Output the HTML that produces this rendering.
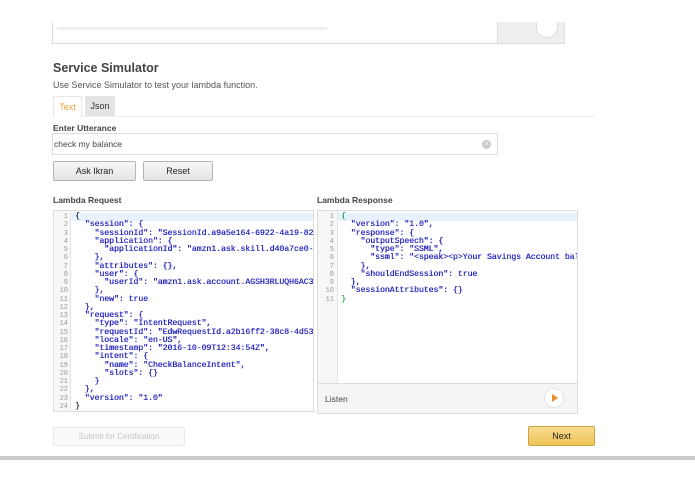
<!DOCTYPE html>
<html><head><meta charset="utf-8"><style>
*{box-sizing:border-box;margin:0;padding:0}
body{width:695px;height:494px;background:#fff;position:relative;overflow:hidden;font-family:"Liberation Sans",Arial,sans-serif;color:#333}
.a{position:absolute}
.code{font-family:"Liberation Mono",monospace;font-size:8.2px;line-height:8.25px;white-space:pre;color:#2828c0;letter-spacing:-0.05px;text-shadow:0.3px 0 0 #2828c0}
.ln{font-family:"Liberation Mono",monospace;font-size:7px;line-height:8.25px;white-space:pre;color:#999;text-align:right}
.btn{border:1px solid #b5b5b5;border-radius:2px;background:linear-gradient(#f7f7f7,#e4e4e4);font-size:9px;text-align:center;color:#222}
</style></head><body>
<div class="a" style="left:52px;top:22px;width:513px;height:22px;border:1px solid #ddd;border-top:none"></div>
<div class="a" style="left:57px;top:27px;width:270px;height:3px;background:#f0f0f0"></div>
<div class="a" style="left:497px;top:22px;width:67px;height:21px;background:#efefef;border-left:1px solid #ddd"></div>
<div class="a" style="left:536px;top:22px;width:22px;height:16px;border-radius:0 0 11px 11px;background:#fff;border:1px solid #ddd;border-top:none"></div>

<div class="a" style="left:53px;top:61px;font-size:12.5px;font-weight:bold;color:#444">Service Simulator</div>
<div class="a" style="left:53px;top:80px;font-size:9px;color:#555">Use Service Simulator to test your lambda function.</div>
<div class="a" style="left:53px;top:96px;width:29px;height:21px;border:1px solid #e6e6e6;border-bottom:none;background:#fff;font-size:9px;color:#e8a23a;text-align:center;line-height:21px">Text</div>
<div class="a" style="left:85px;top:96px;width:30px;height:20px;background:#e4e4e4;font-size:9px;color:#333;text-align:center;line-height:20px">Json</div>
<div class="a" style="left:82px;top:116px;width:513px;height:1px;background:#eee"></div>
<div class="a" style="left:53px;top:123px;font-size:8.5px;font-weight:bold;color:#444">Enter Utterance</div>
<div class="a" style="left:52px;top:133px;width:446px;height:22px;border:1px solid #ddd;font-size:8.5px;color:#444;line-height:20px;padding-left:1px">check my balance</div>
<div class="a" style="left:482px;top:140px;width:9px;height:9px;border-radius:50%;background:#ccc;color:#fff;font-size:7px;line-height:9px;text-align:center">×</div>
<div class="a btn" style="left:53px;top:161px;width:83px;height:20px;line-height:18px">Ask Ikran</div>
<div class="a btn" style="left:143px;top:161px;width:70px;height:20px;line-height:18px">Reset</div>

<div class="a" style="left:53px;top:195px;font-size:8.5px;font-weight:bold;color:#444">Lambda Request</div>
<div class="a" style="left:317px;top:195px;font-size:8.5px;font-weight:bold;color:#444">Lambda Response</div>

<div class="a" style="left:53px;top:210px;width:261px;height:202px;border:1px solid #ddd;overflow:hidden">
<div class="a" style="left:0;top:0;width:17px;height:200px;background:#f7f7f7;border-right:1px solid #e5e5e5"></div>
<div class="a" style="left:17px;top:2px;width:250px;height:8px;background:#e8f2fe"></div>
<div class="a ln" style="left:0;top:2px;width:14px">1
2
3
4
5
6
7
8
9
10
11
12
13
14
15
16
17
18
19
20
21
22
23
24</div>
<div class="a code" style="left:21px;top:2px"><span style="color:#333">{</span>
  "session": {
    "sessionId": "SessionId.a9a5e164-6922-4a19-82
    "application": {
      "applicationId": "amzn1.ask.skill.d40a7ce0-
    },
    "attributes": {},
    "user": {
      "userId": "amzn1.ask.account.AGSH3RLUQH6AC3
    },
    "new": true
  },
  "request": {
    "type": "IntentRequest",
    "requestId": "EdwRequestId.a2b16ff2-38c8-4d53
    "locale": "en-US",
    "timestamp": "2016-10-09T12:34:54Z",
    "intent": {
      "name": "CheckBalanceIntent",
      "slots": {}
    }
  },
  "version": "1.0"
<span style="color:#333">}</span></div>
</div>

<div class="a" style="left:317px;top:210px;width:261px;height:204px;border:1px solid #ddd;overflow:hidden">
<div class="a" style="left:0;top:0;width:20px;height:173px;background:#f7f7f7;border-right:1px solid #e5e5e5"></div>
<div class="a" style="left:20px;top:2px;width:250px;height:8px;background:#e8f2fe"></div>
<div class="a ln" style="left:0;top:2px;width:16px">1
2
3
4
5
6
7
8
9
10
11</div>
<div class="a code" style="left:23px;top:2px"><span style="color:#3c3">{</span>
  "version": "1.0",
  "response": {
    "outputSpeech": {
      "type": "SSML",
      "ssml": "&lt;speak&gt;&lt;p&gt;Your Savings Account bal
    },
    "shouldEndSession": true
  },
  "sessionAttributes": {}
<span style="color:#3c3">}</span></div>
<div class="a" style="left:0;top:172px;width:260px;height:31px;background:#f5f5f5;border-top:1px solid #ddd"></div>
<div class="a" style="left:7px;top:183px;font-size:8.5px;color:#444">Listen</div>
<div class="a" style="left:226px;top:177px;width:20px;height:20px;border-radius:50%;background:#fff;border:1px solid #e5e5e5"></div>
<div class="a" style="left:234px;top:183px;width:0;height:0;border-left:6px solid #e8912a;border-top:4px solid transparent;border-bottom:4px solid transparent"></div>
</div>

<div class="a" style="left:53px;top:427px;width:132px;height:19px;border:1px solid #e8e8e8;background:#f9f9f9;border-radius:2px;font-size:8px;color:#c4c4c4;text-align:center;line-height:17px">Submit for Certification</div>
<div class="a" style="left:528px;top:426px;width:67px;height:20px;border:1px solid #c9a33f;border-radius:2px;background:linear-gradient(#f8dc93,#efc454);font-size:9px;color:#222;text-align:center;line-height:18px">Next</div>
<div class="a" style="left:0;top:456px;width:695px;height:4px;background:#cbcbcb"></div>
</body></html>
